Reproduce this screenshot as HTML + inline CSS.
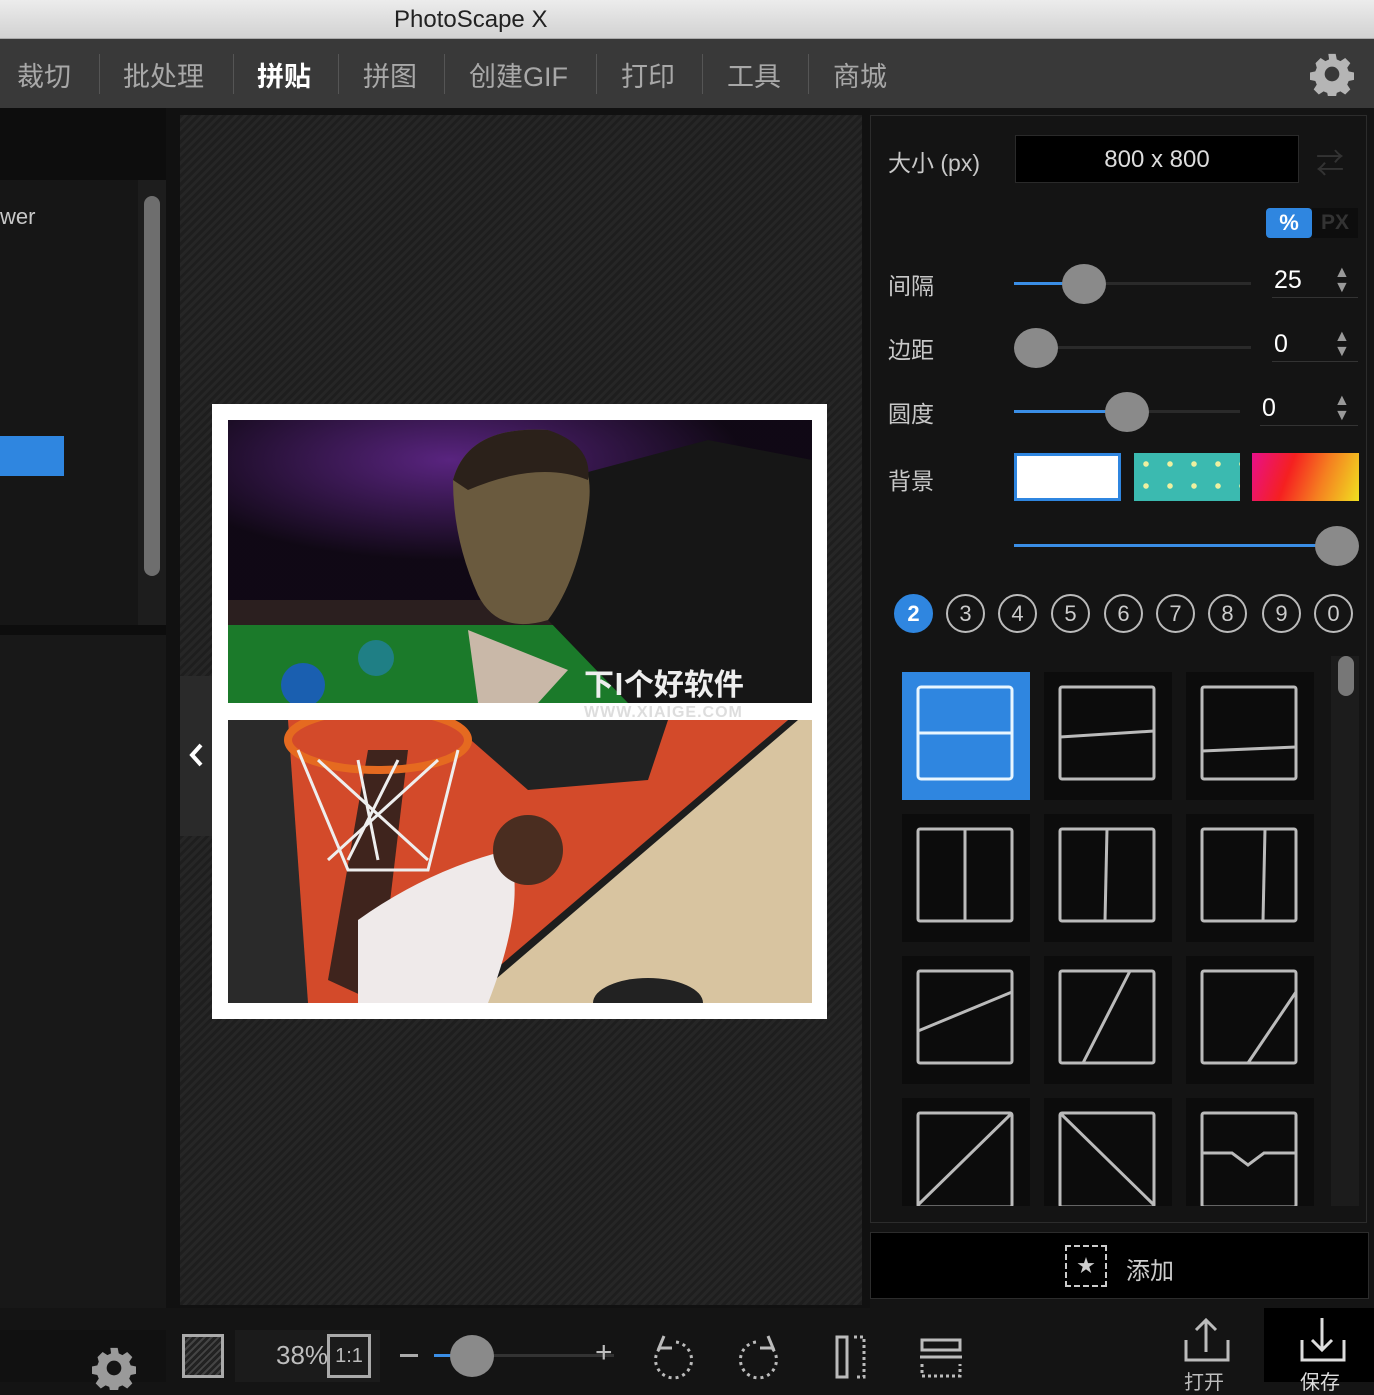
<!DOCTYPE html>
<html><head><meta charset="utf-8"><style>
*{margin:0;padding:0;box-sizing:border-box}
body{width:1374px;height:1382px;overflow:hidden;background:#141414;font-family:"Liberation Sans","Noto Sans CJK SC",sans-serif;position:relative}
.a{position:absolute}
.menu span{position:absolute;top:55px;font-size:27px;color:#a8a8a8}
.sep{position:absolute;top:54px;width:1px;height:40px;background:#555}
.lbl{position:absolute;left:888px;font-size:23px;color:#c8c8c8}
.track{position:absolute;height:3px;background:#2a2a2a}
.fill{position:absolute;height:3px;background:#3a8ee6}
.knob{position:absolute;width:44px;height:40px;border-radius:50%;background:#8a8a8a}
.num{position:absolute;width:39px;height:39px;border:2px solid #bbb;border-radius:50%;color:#ccc;font-size:22px;text-align:center;line-height:35px;top:594px}
.cell{position:absolute;width:128px;height:128px;background:#0c0c0c}
.cell svg{position:absolute;left:14px;top:13px}
.tb{position:absolute;color:#bdbdbd}
</style></head><body>
<div class="a" style="left:0;top:0;width:1374px;height:39px;background:linear-gradient(#ececec,#d2d2d2);border-bottom:1px solid #aaa"></div>
<div class="a" style="left:394px;top:6px;font-size:24px;color:#222">PhotoScape X</div>
<div class="a" style="left:0;top:39px;width:1374px;height:69px;background:#393939"></div>
<div class="menu">
<span style="left:17px">裁切</span><div class="sep" style="left:99px"></div>
<span style="left:123px">批处理</span><div class="sep" style="left:233px"></div>
<span style="left:257px;color:#fff;font-weight:bold">拼贴</span><div class="sep" style="left:338px"></div>
<span style="left:363px">拼图</span><div class="sep" style="left:444px"></div>
<span style="left:469px">创建GIF</span><div class="sep" style="left:596px"></div>
<span style="left:621px">打印</span><div class="sep" style="left:702px"></div>
<span style="left:727px">工具</span><div class="sep" style="left:808px"></div>
<span style="left:833px">商城</span>
</div>
<svg class="a" style="left:1310px;top:52px" width="44" height="44" viewBox="0 0 24 24"><path fill="#b5b5b5" d="M10 1h4l.6 3 2 1 2.6-1.7 2.8 2.8L20.3 8.6l.8 2 3 .6v4l-3 .6-.8 2 1.7 2.6-2.8 2.8-2.6-1.7-2 .8-.6 3h-4l-.6-3-2-.8-2.6 1.7-2.8-2.8 1.7-2.6-.8-2-3-.6v-4l3-.6.8-2L3 6.1 5.8 3.3 8.4 5l2-1z"/><circle cx="12" cy="12" r="4" fill="#393939"/></svg>
<div class="a" style="left:0;top:108px;width:166px;height:72px;background:#0d0d0d"></div>
<div class="a" style="left:0;top:180px;width:166px;height:445px;background:#161616"></div>
<div class="a" style="left:138px;top:180px;width:28px;height:445px;background:#1d1d1d"></div>
<div class="a" style="left:144px;top:196px;width:16px;height:380px;background:#6e6e6e;border-radius:8px"></div>
<div class="a" style="left:0;top:204px;font-size:22px;color:#c8c8c8">wer</div>
<div class="a" style="left:0;top:436px;width:64px;height:40px;background:#2f86e0"></div>
<div class="a" style="left:0;top:625px;width:168px;height:10px;background:#0d0d0d"></div>
<div class="a" style="left:0;top:635px;width:166px;height:695px;background:#181818"></div>
<div class="a" style="left:166px;top:108px;width:704px;height:1200px;background:#111"></div>
<div class="a" style="left:180px;top:115px;width:682px;height:1190px;background:repeating-linear-gradient(135deg,#1e1e1e 0 3px,#262626 3px 6px)"></div>
<div class="a" style="left:180px;top:676px;width:32px;height:160px;background:#2a2a2a"></div>
<svg class="a" style="left:188px;top:742px" width="16" height="26" fill="none" stroke="#fff" stroke-width="4"><path d="M13 3 L4 13 L13 23"/></svg>
<div class="a" style="left:212px;top:404px;width:615px;height:615px;background:#fff"></div>
<svg class="a" style="left:228px;top:420px" width="584" height="283" viewBox="0 0 584 283">
<defs><radialGradient id="pg" cx="0.38" cy="0.2" r="0.5"><stop offset="0" stop-color="#7a2fb0"/><stop offset="1" stop-color="#120818"/></radialGradient></defs>
<rect width="584" height="283" fill="#0c0a0e"/>
<rect width="584" height="200" fill="url(#pg)" opacity=".7"/>
<rect y="180" width="584" height="30" fill="#2b1f1f"/>
<rect y="205" width="584" height="78" fill="#1b7a2a"/>
<path d="M330 60 L480 20 L584 40 L584 283 L400 283 L320 200Z" fill="#161616"/>
<path d="M225 60 Q240 5 320 10 Q370 30 360 90 Q350 160 320 200 Q270 215 250 175 Q225 120 225 60Z" fill="#6a5a3e"/>
<path d="M225 60 Q240 5 320 10 Q365 25 360 60 Q310 40 240 70Z" fill="#2b211a"/>
<path d="M240 210 Q290 230 340 250 L310 283 L250 283Z" fill="#c9b8a8"/>
<circle cx="75" cy="265" r="22" fill="#1a5fb0"/><circle cx="148" cy="238" r="18" fill="#1f7f85"/>
<text x="356" y="275" font-size="30" font-weight="bold" fill="#eee" font-family="Noto Sans CJK SC,sans-serif">下I个好软件</text>
</svg>
<svg class="a" style="left:228px;top:720px" width="584" height="283" viewBox="0 0 584 283">
<rect width="584" height="283" fill="#d34a2a"/>
<path d="M584 0 L584 283 L230 283 L560 0Z" fill="#d8c4a0"/>
<path d="M560 0 L570 0 L240 283 L228 283Z" fill="#1d1d1d"/>
<path d="M220 0 L440 0 L420 60 L300 70Z" fill="#222"/>
<path d="M0 0 L60 0 L80 283 L0 283Z" fill="#2a2a2a"/>
<path d="M100 260 L140 30 L180 30 L150 283Z" fill="#1a1a1a" opacity=".8"/>
<path d="M130 200 Q200 150 280 130 Q300 180 260 283 L130 283Z" fill="#efeaea"/>
<circle cx="300" cy="130" r="35" fill="#4a2d20"/>
<ellipse cx="150" cy="20" rx="90" ry="30" fill="none" stroke="#e56a20" stroke-width="8"/>
<path d="M70 30 L120 150 L200 150 L230 30" fill="none" stroke="#eee" stroke-width="3"/>
<path d="M90 40 L200 140 M130 40 L150 140 M170 40 L120 140 M210 40 L100 140" stroke="#eee" stroke-width="3"/>
<ellipse cx="420" cy="283" rx="55" ry="25" fill="#222"/>
</svg>
<div class="a" style="left:584px;top:704px;font-size:16px;font-weight:bold;color:#ddd;letter-spacing:1px">WWW.XIAIGE.COM</div>
<div class="a" style="left:870px;top:115px;width:497px;height:1108px;background:#141414;border:1px solid #2c2c2c"></div>
<div class="lbl" style="top:144px">大小 (px)</div>
<div class="a" style="left:1015px;top:135px;width:284px;height:48px;background:#000;border:1px solid #2a2a2a;color:#ddd;font-size:24px;text-align:center;line-height:48px">800 x 800</div>
<div class="a" style="left:1316px;top:142px;font-size:28px;color:#333">⇄</div>
<div class="a" style="left:1266px;top:208px;width:46px;height:30px;background:#2f86e0;border-radius:4px;color:#fff;font-size:22px;font-weight:bold;text-align:center;line-height:30px">%</div>
<div class="a" style="left:1312px;top:208px;width:46px;height:30px;background:#0d0d0d;color:#333;font-size:21px;font-weight:bold;text-align:center;line-height:30px">PX</div>
<div class="lbl" style="top:267px">间隔</div>
<div class="track" style="left:1014px;top:282px;width:237px"></div><div class="fill" style="left:1014px;top:282px;width:60px"></div><div class="knob" style="left:1062px;top:264px"></div>
<div class="a" style="left:1274px;top:266px;color:#fff;font-size:25px">25</div>
<div class="lbl" style="top:331px">边距</div>
<div class="track" style="left:1014px;top:346px;width:237px"></div><div class="knob" style="left:1014px;top:328px"></div>
<div class="a" style="left:1274px;top:330px;color:#fff;font-size:25px">0</div>
<div class="lbl" style="top:395px">圆度</div>
<div class="track" style="left:1014px;top:410px;width:226px"></div><div class="fill" style="left:1014px;top:410px;width:100px"></div><div class="knob" style="left:1105px;top:392px"></div>
<div class="a" style="left:1262px;top:394px;color:#fff;font-size:25px">0</div>
<div class="a" style="left:1272px;top:297px;width:86px;height:1px;background:#333"></div>
<div class="a" style="left:1272px;top:361px;width:86px;height:1px;background:#333"></div>
<div class="a" style="left:1260px;top:425px;width:98px;height:1px;background:#333"></div>
<div class="a" style="left:1334px;top:265px;color:#999;font-size:16px;line-height:15px">▲<br>▼</div>
<div class="a" style="left:1334px;top:329px;color:#999;font-size:16px;line-height:15px">▲<br>▼</div>
<div class="a" style="left:1334px;top:393px;color:#999;font-size:16px;line-height:15px">▲<br>▼</div>
<div class="lbl" style="top:462px">背景</div>
<div class="a" style="left:1014px;top:453px;width:107px;height:48px;background:#fff;border:3px solid #2f86e0"></div>
<div class="a" style="left:1134px;top:453px;width:106px;height:48px;background:#3bbab0 radial-gradient(circle,#eef0a0 2.5px,transparent 3px) 0 0/24px 22px"></div>
<div class="a" style="left:1252px;top:453px;width:107px;height:48px;background:linear-gradient(110deg,#e8108a,#f52020 35%,#f58020 65%,#f0e020)"></div>
<div class="fill" style="left:1014px;top:544px;width:310px"></div><div class="knob" style="left:1315px;top:526px"></div>
<div class="num" style="left:894px;background:#2f86e0;border-color:#2f86e0;color:#fff;font-weight:bold">2</div>
<div class="num" style="left:946px">3</div><div class="num" style="left:998px">4</div><div class="num" style="left:1051px">5</div><div class="num" style="left:1104px">6</div><div class="num" style="left:1156px">7</div><div class="num" style="left:1208px">8</div><div class="num" style="left:1262px">9</div><div class="num" style="left:1314px">0</div>
<div class="a" style="left:1331px;top:656px;width:28px;height:550px;background:#1c1c1c"></div>
<div class="a" style="left:1338px;top:656px;width:16px;height:40px;background:#777;border-radius:8px"></div>
<div class="cell" style="left:902px;top:672px;background:#2f86e0"><svg width="100" height="100"><rect x="2" y="2" width="94" height="92" rx="3" fill="none" stroke="#e8f6ff" stroke-width="3"/><line x1="2" y1="48" x2="96" y2="48" stroke="#e8f6ff" stroke-width="3"/></svg></div>
<div class="cell" style="left:1044px;top:672px"><svg width="100" height="100" stroke="#bbb" stroke-width="3" fill="none"><rect x="2" y="2" width="94" height="92" rx="2"/><line x1="2" y1="52" x2="96" y2="46"/></svg></div>
<div class="cell" style="left:1186px;top:672px"><svg width="100" height="100" stroke="#bbb" stroke-width="3" fill="none"><rect x="2" y="2" width="94" height="92" rx="2"/><line x1="2" y1="66" x2="96" y2="62"/></svg></div>
<div class="cell" style="left:902px;top:814px"><svg width="100" height="100" stroke="#bbb" stroke-width="3" fill="none"><rect x="2" y="2" width="94" height="92" rx="2"/><line x1="49" y1="2" x2="49" y2="94"/></svg></div>
<div class="cell" style="left:1044px;top:814px"><svg width="100" height="100" stroke="#bbb" stroke-width="3" fill="none"><rect x="2" y="2" width="94" height="92" rx="2"/><line x1="49" y1="2" x2="47" y2="94"/></svg></div>
<div class="cell" style="left:1186px;top:814px"><svg width="100" height="100" stroke="#bbb" stroke-width="3" fill="none"><rect x="2" y="2" width="94" height="92" rx="2"/><line x1="65" y1="2" x2="63" y2="94"/></svg></div>
<div class="cell" style="left:902px;top:956px"><svg width="100" height="100" stroke="#bbb" stroke-width="3" fill="none"><rect x="2" y="2" width="94" height="92" rx="2"/><line x1="2" y1="62" x2="96" y2="23"/></svg></div>
<div class="cell" style="left:1044px;top:956px"><svg width="100" height="100" stroke="#bbb" stroke-width="3" fill="none"><rect x="2" y="2" width="94" height="92" rx="2"/><line x1="25" y1="94" x2="72" y2="2"/></svg></div>
<div class="cell" style="left:1186px;top:956px"><svg width="100" height="100" stroke="#bbb" stroke-width="3" fill="none"><rect x="2" y="2" width="94" height="92" rx="2"/><line x1="48" y1="94" x2="96" y2="23"/></svg></div>
<div class="cell" style="left:902px;top:1098px;height:108px"><svg width="100" height="95" stroke="#bbb" stroke-width="3" fill="none"><rect x="2" y="2" width="94" height="94" rx="2"/><line x1="2" y1="94" x2="96" y2="2"/></svg></div>
<div class="cell" style="left:1044px;top:1098px;height:108px"><svg width="100" height="95" stroke="#bbb" stroke-width="3" fill="none"><rect x="2" y="2" width="94" height="94" rx="2"/><line x1="2" y1="2" x2="96" y2="94"/></svg></div>
<div class="cell" style="left:1186px;top:1098px;height:108px"><svg width="100" height="95" stroke="#bbb" stroke-width="3" fill="none"><rect x="2" y="2" width="94" height="94" rx="2"/><polyline points="2,42 32,42 48,54 64,42 96,42"/></svg></div>
<div class="a" style="left:870px;top:1232px;width:499px;height:67px;background:#000;border:1px solid #2c2c2c"></div>
<div class="a" style="left:1065px;top:1245px;width:42px;height:42px;border:2px dashed #ccc;color:#ccc;text-align:center;line-height:38px;font-size:18px">★</div>
<div class="a" style="left:1126px;top:1251px;font-size:24px;color:#ccc">添加</div>
<div class="a" style="left:0;top:1308px;width:1374px;height:74px;background:#141414"></div>
<div class="a" style="left:0;top:1330px;width:166px;height:52px;background:#111"></div>
<svg class="a" style="left:92px;top:1346px" width="44" height="44" viewBox="0 0 24 24"><path fill="#9a9a9a" d="M10 1h4l.6 3 2 1 2.6-1.7 2.8 2.8L20.3 8.6l.8 2 3 .6v4l-3 .6-.8 2 1.7 2.6-2.8 2.8-2.6-1.7-2 .8-.6 3h-4l-.6-3-2-.8-2.6 1.7-2.8-2.8 1.7-2.6-.8-2-3-.6v-4l3-.6.8-2L3 6.1 5.8 3.3 8.4 5l2-1z"/><circle cx="12" cy="12" r="4" fill="#141414"/></svg>
<div class="a" style="left:182px;top:1334px;width:42px;height:44px;border:3px solid #aaa;background:repeating-linear-gradient(135deg,#222 0 3px,#444 3px 5px)"></div>
<div class="a" style="left:235px;top:1330px;width:145px;height:52px;background:#1b1b1b"></div>
<div class="tb" style="left:276px;top:1340px;font-size:26px">38%</div>
<div class="a" style="left:327px;top:1334px;width:44px;height:44px;border:3px solid #aaa;color:#bbb;font-size:20px;text-align:center;line-height:38px">1:1</div>
<div class="a" style="left:400px;top:1354px;width:18px;height:3px;background:#aaa"></div>
<div class="a" style="left:434px;top:1354px;width:180px;height:3px;background:#333"></div>
<div class="a" style="left:434px;top:1354px;width:30px;height:3px;background:#3a8ee6"></div>
<div class="a" style="left:450px;top:1335px;width:44px;height:42px;border-radius:50%;background:#8a8a8a"></div>
<div class="tb" style="left:595px;top:1336px;font-size:30px">+</div>
<svg class="a" style="left:646px;top:1332px" width="150" height="50" fill="none" stroke="#bbb" stroke-width="3"><path d="M30 10 A18 18 0 1 1 14 16" stroke-dasharray="3 4"/><path d="M18 4 L13 16 L26 16"/><path d="M110 10 A18 18 0 1 0 126 16" stroke-dasharray="3 4"/><path d="M122 4 L127 16 L114 16"/></svg>
<svg class="a" style="left:832px;top:1332px" width="150" height="50" fill="none" stroke="#bbb" stroke-width="3"><rect x="5" y="5" width="10" height="40"/><path d="M22 5h10v40h-10" stroke-dasharray="3 3"/><path d="M90 8h38v10h-38z"/><line x1="88" y1="25" x2="130" y2="25"/><path d="M90 32v12h38v-12" stroke-dasharray="3 3"/></svg>
<svg class="a" style="left:1182px;top:1316px" width="50" height="66" fill="none" stroke="#bbb" stroke-width="3"><path d="M24 4v32M14 14l10-10 10 10M4 24v20h42v-20"/></svg>
<div class="tb" style="left:1184px;top:1366px;font-size:20px">打开</div>
<div class="a" style="left:1264px;top:1308px;width:110px;height:74px;background:#000"></div>
<svg class="a" style="left:1298px;top:1316px" width="50" height="66" fill="none" stroke="#ddd" stroke-width="3"><path d="M24 2v32M14 24l10 10 10-10M4 24v20h42v-20"/></svg>
<div class="tb" style="left:1300px;top:1366px;font-size:20px;color:#ddd">保存</div>
</body></html>
